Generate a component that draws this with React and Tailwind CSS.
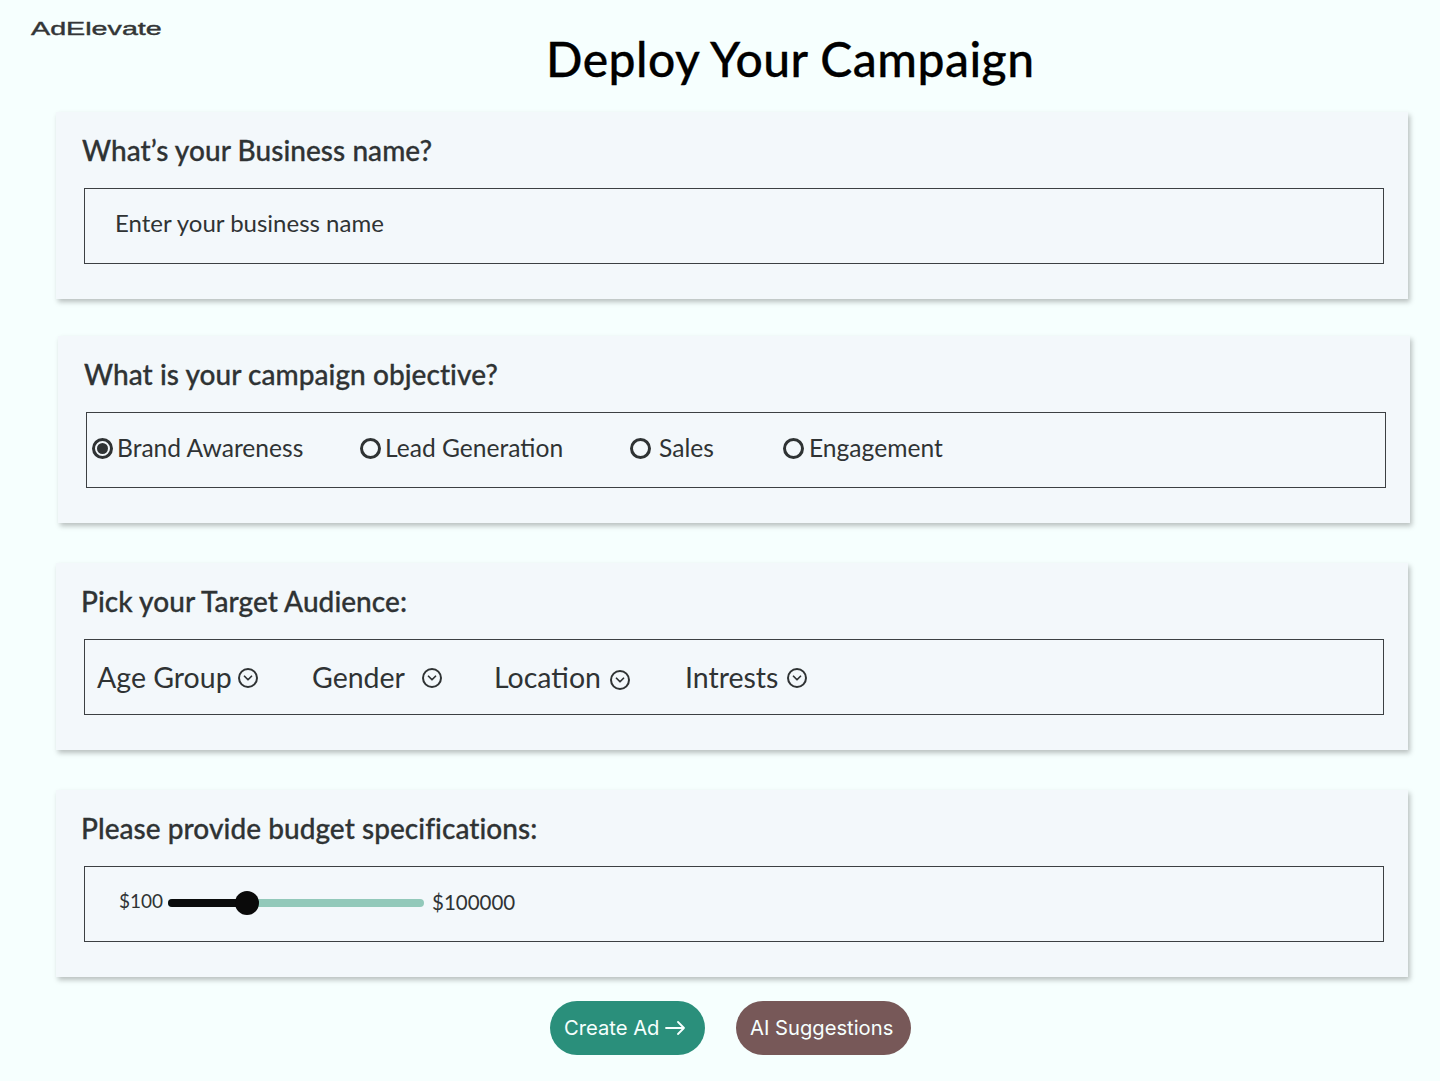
import { ChevronDown } from 'lucide-react';

const heading = "font-['Lato'] text-[28px] leading-[36px] font-medium text-[#2f3334] tracking-[0.05px] [-webkit-text-stroke:0.3px_#2f3334]";
const box = "h-[76px] w-[1300px] border border-[#3c4043] flex items-center";
const card = "w-[1352px] h-[187px] bg-[#f3f8fb] shadow-[2px_3px_5px_rgba(0,0,0,0.25)]";

function Radio({ checked, label, className, gap = 'gap-[4px]' }) {
  return (
    <label className={`flex items-center ${gap} ${className}`}>
      <span className="-mt-[4px] w-[21px] h-[21px] rounded-full border-[3px] border-[#2f3334] flex items-center justify-center">
        {checked && <span className="w-[11px] h-[11px] rounded-full bg-[#2f3334]" />}
      </span>
      <span className="pb-[4px] font-['Lato'] text-[24.6px] text-[#2f3334] leading-none">{label}</span>
    </label>
  );
}

function Dropdown({ label, gap, iconClass = 'mt-[2px]', className }) {
  return (
    <div className={`flex items-center ${className}`} style={{ gap }}>
      <span className="font-['Lato'] text-[28.5px] text-[#2f3334] leading-none">{label}</span>
      <span className={`${iconClass} w-[20px] h-[20px] rounded-full border-2 border-[#2f3334] flex items-center justify-center`}>
        <ChevronDown size={14} strokeWidth={3} className="text-[#2f3334]" />
      </span>
    </div>
  );
}

export default function App() {
  return (
    <div className="min-h-screen bg-[#f6fffe] pb-[26px] font-['Lato']">

      {/* header */}
      <header className="flex h-[112px]">
        <div className="ml-[31px] mt-[18px] w-[130px] h-[22px] font-['Liberation_Sans'] text-[19px] leading-[22px] text-[#333637] [-webkit-text-stroke:0.4px_#333637] origin-left scale-x-[1.51] whitespace-nowrap">
          AdElevate
        </div>
        <h1 className="ml-[385px] mt-[31px] text-[48px] leading-[56px] font-medium tracking-[0.5px] [-webkit-text-stroke:0.3px_#000] text-black whitespace-nowrap">
          Deploy Your Campaign
        </h1>
      </header>

      <section className={`${card} ml-[56px] pt-[20px] pl-[26px]`}>
        <h2 className={heading}>What’s your Business name?</h2>
        <div className={`${box} mt-[20px] ml-[2px] pl-[30px]`}>
          <span className="-mt-[6px] text-[24px] text-[#2f3334] leading-none">Enter your business name</span>
        </div>
      </section>

      <section className={`${card} ml-[58px] mt-[37px] pt-[20px] pl-[26px]`}>
        <h2 className={heading}>What is your campaign objective?</h2>
        <div className={`${box} mt-[20px] ml-[2px] pl-[5px]`}>
          <Radio checked label="Brand Awareness" className="w-[268px]" />
          <Radio label="Lead Generation" className="w-[270px]" />
          <Radio label="Sales" gap="gap-[8px]" className="w-[153px]" />
          <Radio label="Engagement" gap="gap-[5px]" />
        </div>
      </section>

      <section className={`${card} ml-[56px] mt-[40px] pt-[20px] pl-[25px]`}>
        <h2 className={heading}>Pick your Target Audience:</h2>
        <div className={`${box} mt-[20px] ml-[3px] pl-[12px]`}>
          <Dropdown label="Age Group" gap="6px" className="w-[215px]" />
          <Dropdown label="Gender" gap="17px" className="w-[182px]" />
          <Dropdown label="Location" gap="9px" iconClass="mt-[5px]" className="w-[191px]" />
          <Dropdown label="Intrests" gap="9px" />
        </div>
      </section>

      <section className={`${card} ml-[56px] mt-[40px] pt-[20px] pl-[25px]`}>
        <h2 className={heading}>Please provide budget specifications:</h2>
        <div className={`${box} mt-[20px] ml-[3px] pl-[34px]`}>
          <span className="w-[49px] -mt-[7px] text-[19px] text-[#2f3334] leading-none">$100</span>
          <div className="relative -mt-[2px] w-[256px] h-[8px] rounded-full bg-[#92c9ba] flex">
            <div className="w-[79px] h-[8px] rounded-l-full bg-[#0a0c0c]" />
            <div className="absolute left-[67px] -top-[8px] w-[24px] h-[24px] rounded-full bg-[#0a0a0a]" />
          </div>
          <span className="ml-[8px] -mt-[4px] text-[20.5px] text-[#2f3334] leading-none">$100000</span>
        </div>
      </section>

      {/* actions */}
      <div className="mt-[24px] ml-[550px] flex gap-[31px]">
        <button className="w-[155px] h-[54px] rounded-full bg-[#2a8f7b] text-[#f6fffe] font-['Inter'] text-[20.2px] flex items-center pl-[14px] gap-[6px]">
          Create Ad
          <svg width="20" height="14" viewBox="0 0 20 14" fill="none" stroke="currentColor" strokeWidth="1.8" strokeLinecap="round" strokeLinejoin="round">
            <path d="M1 7H19M13 1l6 6-6 6" />
          </svg>
        </button>
        <button className="w-[175px] h-[54px] rounded-full bg-[#775858] text-[#f6fffe] font-['Inter'] text-[20.2px] flex items-center pl-[14px]">
          AI Suggestions
        </button>
      </div>
    </div>
  );
}
